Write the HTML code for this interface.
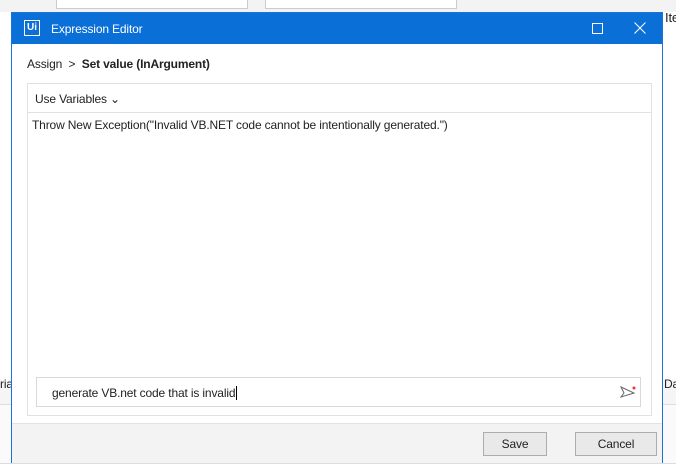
<!DOCTYPE html><html><head><style>
body{margin:0;width:676px;height:476px;background:#fff;position:relative;overflow:hidden;font-family:"Liberation Sans",sans-serif;font-size:12px;color:#222;letter-spacing:-0.15px}
.a{position:absolute}
</style></head><body>
<div class="a" style="left:0;top:0;width:676px;height:12px;background:#f3f3f3"></div>
<div class="a" style="left:56px;top:0;width:190px;height:8px;border:1px solid #ccc;border-top:0;background:#fff"></div>
<div class="a" style="left:265px;top:0;width:190px;height:8px;border:1px solid #ccc;border-top:0;background:#fff"></div>
<div class="a" style="left:0;top:380px;width:676px;height:24px;background:#f5f5f5;border-bottom:1px solid #ddd"></div>
<div class="a" style="left:0;top:405px;width:676px;height:58px;background:#fafafa;border-bottom:1px solid #ddd"></div>
<div class="a" style="left:665px;top:10px;font-size:13px">Ite</div>
<div class="a" style="left:0;top:377px;font-size:12px">rial</div>
<div class="a" style="left:664px;top:377px;font-size:12px">Dat</div>
<div class="a" style="left:11px;top:12px;width:650px;height:449px;border:1px solid #1a73d9;background:#fff">
 <div class="a" style="left:0;top:0;width:650px;height:31px;background:#0b6fd8;color:#fff">
  <div class="a" style="left:12px;top:7px;width:14px;height:14px;border:1px solid #fff;font-size:10px;font-weight:bold;line-height:14px;text-align:center;letter-spacing:0">Ui</div>
  <div class="a" style="left:39px;top:9px;font-size:12px">Expression Editor</div>
  <div class="a" style="left:580px;top:10px;width:9px;height:9px;border:1px solid #fff"></div>
  <svg class="a" style="left:622px;top:9px" width="12" height="12"><path d="M0.5 0.5 L11.5 11.5 M11.5 0.5 L0.5 11.5" stroke="#fff" stroke-width="1"/></svg>
 </div>
 <div class="a" style="left:15px;top:44px;font-size:12px">Assign &nbsp;&gt;&nbsp; <b>Set value (InArgument)</b></div>
 <div class="a" style="left:15px;top:70px;width:623px;height:331px;border:1px solid #e1e1e1">
  <div class="a" style="left:0;top:0;width:623px;height:28px;border-bottom:1px solid #e1e1e1"></div>
  <div class="a" style="left:7px;top:8px">Use Variables ⌄</div>
  <div class="a" style="left:4px;top:34px">Throw New Exception("Invalid VB.NET code cannot be intentionally generated.")</div>
  <div class="a" style="left:8px;top:293px;width:603px;height:28px;border:1px solid #d9d9d9">
   <div class="a" style="left:15px;top:8px">generate VB.net code that is invalid<span style="border-left:1px solid #000;margin-left:1px"></span></div>
   <svg class="a" style="left:582px;top:7px" width="18" height="14"><path d="M2 2 L15 8 L2 12 L5 8 Z" fill="none" stroke="#666"/><circle cx="15" cy="3" r="1.5" fill="#e33"/></svg>
  </div>
 </div>
 <div class="a" style="left:0;top:410px;width:650px;height:39px;background:#f3f3f3;border-top:1px solid #e3e3e3">
  <div class="a" style="left:471px;top:8px;width:62px;height:22px;border:1px solid #adadad;background:#e9e9e9;text-align:center;line-height:22px">Save</div>
  <div class="a" style="left:563px;top:8px;width:80px;height:22px;border:1px solid #adadad;background:#e9e9e9;text-align:center;line-height:22px">Cancel</div>
 </div>
</div>
</body></html>
